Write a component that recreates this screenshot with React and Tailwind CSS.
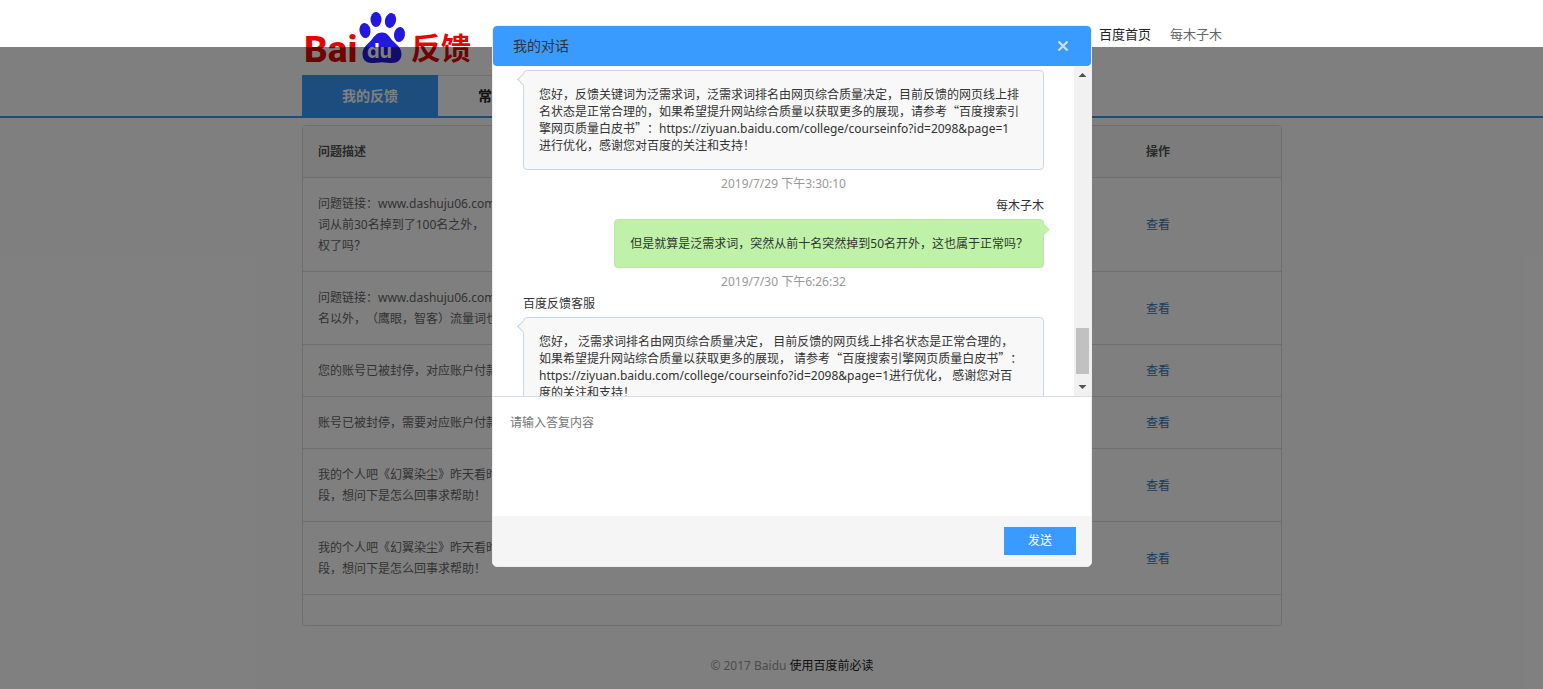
const rows = [
  '问题链接：www.dashuju06.com\n词从前30名掉到了100名之外，（\n权了吗？',
  '问题链接：www.dashuju06.com\n名以外，（鹰眼，智客）流量词也',
  '您的账号已被封停，对应账户付款',
  '账号已被封停，需要对应账户付款',
  '我的个人吧《幻翼染尘》昨天看时\n段，想问下是怎么回事求帮助！',
  '我的个人吧《幻翼染尘》昨天看时\n段，想问下是怎么回事求帮助！',
];

const messages = [
  {
    id: 1,
    from: 'service',
    lines: [
      '您好，反馈关键词为泛需求词，泛需求词排名由网页综合质量决定，目前反馈的网页线上排',
      '名状态是正常合理的，如果希望提升网站综合质量以获取更多的展现，请参考“百度搜索引',
      '擎网页质量白皮书”：https://ziyuan.baidu.com/college/courseinfo?id=2098&page=1',
      '进行优化，感谢您对百度的关注和支持！',
    ],
  },
  {
    id: 2,
    from: 'user',
    time: '2019/7/29 下午3:30:10',
    name: '每木子木',
    lines: ['但是就算是泛需求词，突然从前十名突然掉到50名开外，这也属于正常吗？'],
  },
  {
    id: 3,
    from: 'service',
    time: '2019/7/30 下午6:26:32',
    name: '百度反馈客服',
    lines: [
      '您好， 泛需求词排名由网页综合质量决定， 目前反馈的网页线上排名状态是正常合理的，',
      '如果希望提升网站综合质量以获取更多的展现， 请参考“百度搜索引擎网页质量白皮书”：',
      'https://ziyuan.baidu.com/college/courseinfo?id=2098&page=1进行优化， 感谢您对百',
      '度的关注和支持！',
    ],
  },
];

function Logo() {
  return (
    <svg width="172" height="64" viewBox="0 0 172 64" role="img" aria-label="Baidu 反馈">
      <text x="0" y="52" fill="#e10601" className="font-['Roboto'] text-[37px] font-extrabold">Bai</text>
      <g fill="#2319dc">
        <ellipse cx="61" cy="20.500" rx="5.500" ry="7.500" transform="rotate(-10 61 20.500)" />
        <ellipse cx="72" cy="9.500" rx="5.500" ry="7.500" />
        <ellipse cx="86.500" cy="10.500" rx="5.500" ry="7.500" transform="rotate(14 86.500 10.500)" />
        <ellipse cx="95.500" cy="24.500" rx="5.500" ry="7.500" transform="rotate(8 95.500 24.500)" />
        <path d="M78 22.500c-6 0-8.500 5-11.500 8.500-4 4-8 7-8 13 0 6 4 9 9 9 3.500 0 7-.8 10.500-.8s6.500.8 10 .8c5.500 0 9.500-3 9.500-9s-4.500-9-8.500-13c-3.500-3.500-5-8.500-11-8.500Z" />
      </g>
      <text x="63" y="48" fill="#fff" className="font-['Inter'] text-[20px] font-bold">du</text>
      <text x="107" y="49" fill="#e10601" className="font-['Noto_Sans_CJK_SC'] text-[30px] font-bold">反馈</text>
    </svg>
  );
}

// Quotation marks keep their full width only in the CJK face
function Line({ text }) {
  return (
    <p className="whitespace-pre">
      {text.split(/([“”])/).map((part, i) =>
        part === '“' || part === '”' ? (
          <span key={i} className="font-['Noto_Sans_CJK_SC',sans-serif] leading-none">{part}</span>
        ) : (
          part
        )
      )}
    </p>
  );
}

function Message({ from, time, name, lines }) {
  const mine = from === 'user';
  return (
    <li className="flex flex-col gap-[5px]">
      {time && <time className="text-center text-[#999]">{time}</time>}
      {name && <span className={mine ? 'text-right' : ''}>{name}</span>}
      <div
        className={
          mine
            ? 'relative self-end rounded border border-[#b5e8a0] bg-[#bff2a8] p-[15px]'
            : 'relative rounded border border-[#c5d7e9] bg-[#f8f8f8] p-[15px]'
        }
      >
        <span
          className={
            mine
              ? 'absolute top-[5px] -right-[5px] size-[9px] rotate-45 bg-[#bff2a8]'
              : 'absolute top-1 -left-[5px] size-[9px] rotate-45 border-b border-l border-[#c5d7e9] bg-[#f8f8f8]'
          }
        />
        {lines.map(text => <Line key={text} text={text} />)}
      </div>
    </li>
  );
}

function ScrollBar() {
  return (
    <div className="flex w-[17px] shrink-0 flex-col items-center bg-[#f1f1f1]" aria-hidden="true">
      <svg width="17" height="17" viewBox="0 0 17 17" className="shrink-0"><path d="M4.500 11h8L8.500 7Z" fill="#505050" /></svg>
      <div className="flex-1" />
      <div className="h-[46px] w-[13px] shrink-0 bg-[#c1c1c1]" />
      <svg width="17" height="22" viewBox="0 0 17 22" className="shrink-0"><path d="M4.500 11h8l-4 4Z" fill="#505050" /></svg>
    </div>
  );
}

function Dialog() {
  return (
    <section
      role="dialog"
      aria-labelledby="dialog-title"
      className="w-[600px] overflow-hidden rounded-[5px] border border-[#eee] bg-white"
    >
      <header className="flex h-10 items-center justify-between rounded bg-[#3a9bff] px-5">
        <h2 id="dialog-title" className="text-sm text-[#333]">我的对话</h2>
        <button type="button" aria-label="关闭" className="flex size-4 items-center justify-center">
          <svg width="12" height="12" viewBox="0 0 12 12"><path d="M1.500 1.500l9 9M10.500 1.500l-9 9" stroke="#cdd9e6" strokeWidth="2.400" /></svg>
        </button>
      </header>
      <div className="flex h-[330px]">
        <ul className="flex min-w-0 flex-1 flex-col gap-[5px] overflow-hidden px-[30px] pt-1 leading-[17px] text-[#333]">
          {messages.map(m => <Message key={m.id} {...m} />)}
        </ul>
        <ScrollBar />
      </div>
      <textarea
        aria-label="答复内容"
        placeholder="请输入答复内容"
        className="block h-[120px] w-full resize-none border-t border-[#d5dde5] px-[17px] py-[17px] leading-[17px] outline-none placeholder:text-[#757575]"
      />
      <footer className="flex h-[50px] items-center justify-end bg-[#f5f5f5] px-[15px]">
        <button type="button" className="h-7 w-[72px] bg-[#3a9bff] text-white">发送</button>
      </footer>
    </section>
  );
}

export default function App() {
  return (
    <div
      className="relative min-h-screen bg-white font-['Noto_Sans','Noto_Sans_CJK_SC',sans-serif] text-xs text-[#666] [text-spacing-trim:space-all]"
      lang="zh-CN"
    >
      <header className="border-b-2 border-[#3a9bff] pl-[41px]">
        <div className="mx-auto w-full max-w-[980px]">
          <div className="flex h-[75px] items-start justify-between pt-[10px] pr-[60px] pl-[2px]">
            <a href="#home"><Logo /></a>
            <nav className="flex gap-[19px] pt-[14px] text-[13px] leading-5">
              <a href="#baidu" className="text-[#222]">百度首页</a>
              <a href="#user">每木子木</a>
            </nav>
          </div>
          <nav className="flex text-sm leading-10 font-bold">
            <a href="#mine" className="border-t border-[#3a9bff] bg-[#3a9bff] px-10 text-white">我的反馈</a>
            <a href="#faq" className="border-t border-[#ddd] px-10 text-[#222]">常见问题</a>
          </nav>
        </div>
      </header>

      <main className="pt-[7px] pl-[41px]">
        <div className="mx-auto w-full max-w-[980px] rounded-sm border border-[#ddd] pb-[30px]">
          <table className="w-full text-left leading-[21px]">
            <thead className="bg-[#f9f9f9] text-[#555]">
              <tr className="border-b border-[#ddd]">
                <th className="p-[15px] font-bold">问题描述</th>
                <th className="w-[150px] p-[15px] font-bold">操作</th>
              </tr>
            </thead>
            <tbody>
              {rows.map((text, i) => (
                <tr key={i} className="border-b border-[#ddd]">
                  <td className="whitespace-pre-line p-[15px]">{text}</td>
                  <td className="p-[15px]"><a href="#view" className="text-[#337ab7]">查看</a></td>
                </tr>
              ))}
            </tbody>
          </table>
        </div>
      </main>

      <footer className="pt-[29px] pl-[41px] text-center leading-[21px] text-[#999]">
        © 2017 Baidu <a href="#terms" className="text-[#222]">使用百度前必读</a>
      </footer>

      <div className="absolute inset-x-0 top-[47px] bottom-0 bg-black/50" />
      <div className="absolute inset-x-0 top-[25px] flex justify-center pl-[41px]">
        <Dialog />
      </div>
    </div>
  );
}
